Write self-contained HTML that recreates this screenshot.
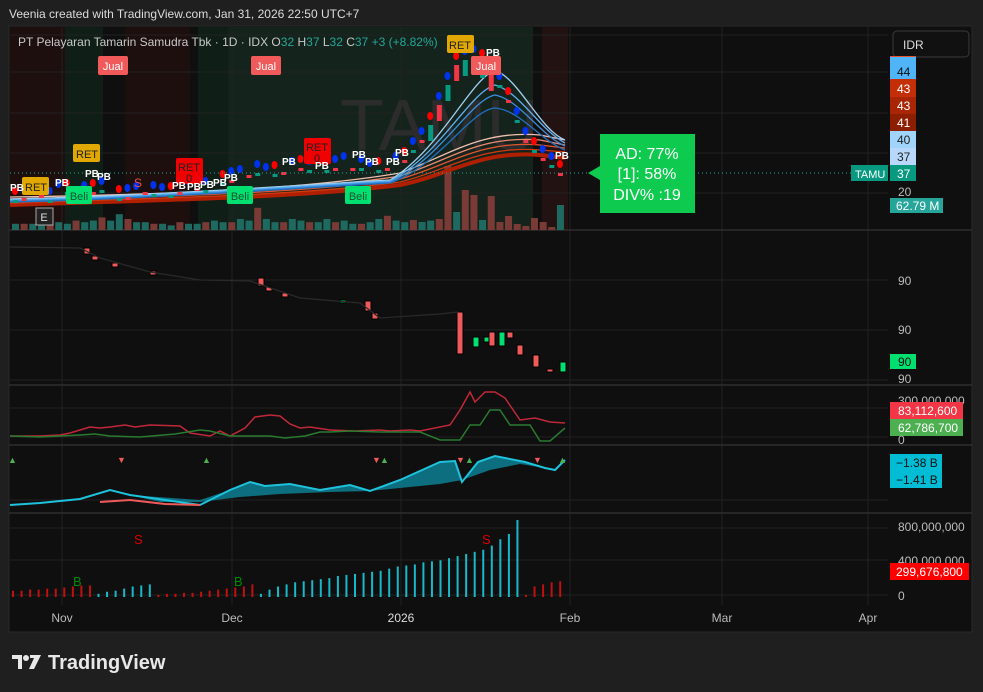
<!DOCTYPE html>
<html><head><meta charset="utf-8"><style>
body{margin:0;width:983px;height:692px;background:#1f1f1f;overflow:hidden;font-family:"Liberation Sans",sans-serif;}
svg{position:absolute;left:0;top:0}
</style></head><body>
<svg id="s" width="983" height="692" xmlns="http://www.w3.org/2000/svg" font-family="Liberation Sans, sans-serif">
<rect width="983" height="692" fill="#1f1f1f"/>
<text x="9" y="18" fill="#dcdcdc" font-size="12">Veenia created with TradingView.com, Jan 31, 2026 22:50 UTC+7</text>
<rect x="9" y="26" width="963" height="606" fill="#0f0f0f" stroke="#2a2a2a"/>
<rect x="10" y="27" width="55" height="203" fill="#1e0f0f"/>
<rect x="65" y="27" width="38" height="203" fill="#0f1f17"/>
<rect x="125" y="27" width="65" height="203" fill="#1e0f0f"/>
<rect x="198" y="27" width="30" height="203" fill="#0f1f17"/>
<rect x="228" y="27" width="237" height="203" fill="#14241c"/>
<rect x="465" y="27" width="68" height="203" fill="#14241c"/>
<rect x="542" y="27" width="26" height="203" fill="#221212"/>
<g id="grid" stroke="#222" stroke-width="1"></g>
<text x="340" y="150" fill="#2c2c2c" font-size="72">TAMU</text>
<g stroke="#2e2e2e" stroke-width="1.5">
<line x1="9" y1="230" x2="972" y2="230"/><line x1="9" y1="385" x2="972" y2="385"/>
<line x1="9" y1="445" x2="972" y2="445"/><line x1="9" y1="513" x2="972" y2="513"/>
</g>
<g id="vol"></g>
<g fill="none" stroke-width="1.3">
<path d="M10 205 C150 200 300 198 400 185 C450 175 480 150 540 155 L565 158" stroke="#b02000" stroke-width="4"/>
<path d="M10 203 C150 198 300 196 400 182 C450 170 480 145 540 150 L565 152" stroke="#d03a10"/>
<path d="M10 201 C150 197 300 194 400 179 C450 165 480 140 540 145 L565 148" stroke="#e05530"/>
<path d="M10 199 C150 196 300 192 400 176 C450 160 480 135 540 140 L565 145" stroke="#e88a70"/>
<path d="M10 197 C150 195 300 190 400 173 C450 155 480 130 540 135 L565 140" stroke="#f0c0b0"/>
<path d="M10 199 C150 196 300 185 390 180 C440 150 470 80 495 70 C520 80 540 130 565 140" stroke="#9fd0f0"/>
<path d="M10 200 C150 197 300 186 390 181 C440 155 470 92 495 85 C520 92 540 130 565 143" stroke="#60b0f0"/>
<path d="M10 201 C150 198 300 187 390 182 C440 160 470 100 495 95 C520 100 540 135 565 146" stroke="#3a90e0"/>
<path d="M10 202 C150 199 300 188 390 183 C440 165 470 110 495 108 C520 110 540 140 565 150" stroke="#2070c0"/>
</g>
<g id="dyn"></g>
<line x1="10" y1="173" x2="888" y2="173" stroke="#26a69a" stroke-dasharray="1 3"/>
<g font-size="11" text-anchor="middle">
<rect x="98" y="56" width="30" height="19" rx="2" fill="#f05a5a"/><text x="113" y="70" fill="#fff">Jual</text>
<rect x="251" y="56" width="30" height="19" rx="2" fill="#f05a5a"/><text x="266" y="70" fill="#fff">Jual</text>
<rect x="471" y="56" width="30" height="19" rx="2" fill="#f05a5a"/><text x="486" y="70" fill="#fff">Jual</text>
<rect x="447" y="35" width="27" height="18" rx="2" fill="#e0a800"/><text x="460" y="49" fill="#222">RET</text>
<rect x="73" y="144" width="27" height="18" rx="2" fill="#e0a800"/><text x="87" y="158" fill="#222">RET</text>
<rect x="22" y="177" width="27" height="18" rx="2" fill="#e0a800"/><text x="36" y="191" fill="#222">RET</text>
<rect x="176" y="158" width="27" height="26" rx="2" fill="#f00000"/><text x="189" y="171" fill="#222">RET</text><text x="189" y="182" fill="#222">0</text>
<rect x="304" y="138" width="27" height="26" rx="2" fill="#f00000"/><text x="317" y="151" fill="#222">RET</text><text x="317" y="162" fill="#222">0</text>
<rect x="66" y="186" width="26" height="18" rx="2" fill="#00e070"/><text x="79" y="200" fill="#1a5030">Beli</text>
<rect x="227" y="186" width="26" height="18" rx="2" fill="#00e070"/><text x="240" y="200" fill="#1a5030">Beli</text>
<rect x="345" y="186" width="26" height="18" rx="2" fill="#00e070"/><text x="358" y="200" fill="#1a5030">Beli</text>
<rect x="36" y="208" width="17" height="17" fill="#222" stroke="#aaa"/><text x="44" y="221" fill="#ddd">E</text>
</g>
<g font-size="10" font-weight="bold" fill="#fff">
<text x="10" y="191">PB</text><text x="55" y="186">PB</text><text x="97" y="180">PB</text><text x="85" y="177">PB</text>
<text x="172" y="189">PB</text><text x="187" y="190">PB</text><text x="200" y="188">PB</text><text x="213" y="186">PB</text><text x="224" y="181">PB</text>
<text x="282" y="165">PB</text><text x="315" y="169">PB</text><text x="352" y="158">PB</text><text x="395" y="156">PB</text><text x="365" y="165">PB</text><text x="386" y="165">PB</text>
<text x="486" y="56">PB</text><text x="555" y="159">PB</text>
</g>
<text x="134" y="187" fill="#f05050" font-size="12">S</text>
<text x="18" y="46" fill="#c8c8c8" font-size="12">PT Pelayaran Tamarin Samudra Tbk · 1D · IDX  O<tspan fill="#26a69a">32</tspan>  H<tspan fill="#26a69a">37</tspan>  L<tspan fill="#26a69a">32</tspan>  C<tspan fill="#26a69a">37</tspan>  <tspan fill="#26a69a">+3 (+8.82%)</tspan></text>
<path d="M600 134 L695 134 L695 213 L600 213 L600 180 L588 173 L600 166 Z" fill="#0ecb4f"/>
<g fill="#fff" font-size="16" text-anchor="middle"><text x="647" y="159">AD: 77%</text><text x="647" y="179"> [1]: 58%</text><text x="647" y="200">DIV% :19</text></g>
<rect x="893" y="31" width="76" height="26" rx="4" fill="#111" stroke="#3a3a3a"/><text x="903" y="49" fill="#ddd" font-size="12">IDR</text>
<g font-size="12" text-anchor="start">
<rect x="890" y="56" width="26" height="2" fill="#e05530"/>
<rect x="890" y="57" width="26" height="22" fill="#50b4f8"/><text x="897" y="76" fill="#111">44</text>
<rect x="890" y="79" width="26" height="18" fill="#c42f08"/><text x="897" y="93" fill="#fff">43</text>
<rect x="890" y="97" width="26" height="17" fill="#a82606"/><text x="897" y="110" fill="#fff">43</text>
<rect x="890" y="114" width="26" height="17" fill="#8c1e02"/><text x="897" y="127" fill="#fff">41</text>
<rect x="890" y="131" width="26" height="17" fill="#a0d4fa"/><text x="897" y="144" fill="#222">40</text>
<rect x="890" y="148" width="26" height="17" fill="#b8d8fb"/><text x="897" y="161" fill="#222">37</text>
<rect x="890" y="165" width="26" height="16" fill="#089981"/><text x="897" y="178" fill="#fff">37</text>
<rect x="851" y="165" width="37" height="16" fill="#089981"/><text x="855" y="178" fill="#fff" font-size="11">TAMU</text>
<text x="898" y="196" fill="#bbb">20</text>
<rect x="890" y="198" width="53" height="15" fill="#26a69a"/><text x="896" y="210" fill="#fff">62.79 M</text>
<text x="898" y="285" fill="#bbb">90</text><text x="898" y="334" fill="#bbb">90</text>
<rect x="890" y="354" width="26" height="15" fill="#00e070"/><text x="898" y="366" fill="#111">90</text>
<text x="898" y="383" fill="#bbb">90</text>
<text x="898" y="405" fill="#bbb">300,000,000</text>
<rect x="890" y="402" width="73" height="17" fill="#f23645"/><text x="898" y="415" fill="#fff">83,112,600</text>
<rect x="890" y="419" width="73" height="17" fill="#4caf50"/><text x="898" y="432" fill="#fff">62,786,700</text>
<text x="898" y="444" fill="#bbb">0</text>
<rect x="890" y="454" width="52" height="34" fill="#00bcd4"/><text x="896" y="467" fill="#111">−1.38 B</text><text x="896" y="484" fill="#111">−1.41 B</text>
<text x="898" y="531" fill="#bbb">800,000,000</text>
<text x="898" y="565" fill="#bbb">400,000,000</text>
<rect x="890" y="563" width="79" height="17" fill="#ff0000"/><text x="896" y="576" fill="#fff">299,676,800</text>
<text x="898" y="600" fill="#bbb">0</text>
</g>
<g fill="#bbb" font-size="12" text-anchor="middle"><text x="62" y="622">Nov</text><text x="232" y="622">Dec</text><text x="401" y="622" fill="#ddd">2026</text><text x="570" y="622">Feb</text><text x="722" y="622">Mar</text><text x="868" y="622">Apr</text></g>
<polyline fill="none" stroke="#c0283a" stroke-width="1.5" points="10,436 40,436 60,435 70,433 80,430 90,427 100,428 110,427 125,425 135,427 150,425 180,426 190,433 210,436 220,431 230,436 245,428 255,417 270,415 280,416 290,424 300,428 310,427 330,430 355,431 380,430 390,431 410,430 420,431 450,425 460,410 470,392 475,402 485,392 495,392 505,398 520,420 535,418 550,422 565,423"/>
<polyline fill="none" stroke="#2a7a30" stroke-width="1.5" points="10,436 40,437 60,436 80,435 95,434 110,436 140,437 175,434 200,430 210,431 230,436 250,436 270,436 285,438 305,436 320,432 330,432 350,431 380,432 420,432 440,440 460,440 470,425 480,425 490,410 500,410 510,425 530,425 540,441 550,441 565,428"/>
<path d="M130 495 L200 500 L230 490 L250 482 L265 486 L290 484 L320 490 L350 485 L370 491 L400 480 L440 462 L455 461 L462 482 L478 462 L495 456 L525 462 L545 468 L520 464 L490 470 L462 480 L440 484 L400 488 L370 491 L330 492 L280 494 L240 497 L200 502 L160 502 Z" fill="#0c6e7e"/>
<polyline fill="none" stroke="#1ec2dc" stroke-width="2" points="10,505 40,503 80,499 110,490 130,495 200,505 230,490 250,482 265,486 290,484 320,490 350,485 370,491 400,480 440,462 455,461 462,482 478,462 495,456 525,462 545,468 555,470 565,460"/>
<polyline fill="none" stroke="#f05a5a" stroke-width="2" points="100,502 130,500 165,504 200,505 M320,492 327,494 M455,461 462,482 M535,466 550,470 555,470"/>
<g font-size="9"><text x="8" y="463" fill="#4caf50">▲</text><text x="117" y="463" fill="#f05a5a">▼</text><text x="202" y="463" fill="#4caf50">▲</text><text x="372" y="463" fill="#f05a5a">▼</text><text x="380" y="463" fill="#4caf50">▲</text><text x="456" y="463" fill="#f05a5a">▼</text><text x="465" y="463" fill="#4caf50">▲</text><text x="533" y="463" fill="#f05a5a">▼</text><text x="558" y="463" fill="#4caf50">▲</text></g>
<g font-size="13"><text x="134" y="544" fill="#d00">S</text><text x="482" y="544" fill="#d00">S</text><text x="73" y="586" fill="#080">B</text><text x="234" y="586" fill="#080">B</text></g>
<polyline fill="none" stroke="#2a2a2a" stroke-width="1.2" points="10,247 80,248 100,258 150,272 200,280 250,281 300,298 360,303 380,318 440,314 458,312"/>
<g fill="#e8e8e8"><path d="M12 655 h10 v14 h-4 v-10 h-6z"/><circle cx="26" cy="658" r="3"/><path d="M30 655 h11 l-7 14 h-5 l5 -11 h-4z"/></g>
<text x="48" y="669" fill="#e8e8e8" font-size="20" font-weight="bold">TradingView</text>
</svg>
<script>
var NS="http://www.w3.org/2000/svg",d=document.getElementById('dyn'),g=document.getElementById('grid'),vg=document.getElementById('vol');
function el(t,a,p){var e=document.createElementNS(NS,t);for(var k in a)e.setAttribute(k,a[k]);(p||d).appendChild(e);return e;}
[62,232,401,570,722,868].forEach(function(x){el('line',{x1:x,y1:27,x2:x,y2:605},g)});
[35,72,113,153,193,280,330,380,408,437,500,528,560,595].forEach(function(y){el('line',{x1:10,y1:y,x2:888,y2:y},g)});
var N=64,x0=12,dx=8.65;
var vol=[2,2,2,3,2,3,2,4,3,4,6,4,8,5,3,3,2,2,1,3,2,2,3,4,3,3,5,4,12,5,3,3,5,4,3,3,5,3,4,2,2,3,5,7,4,3,6,5,4,5,3,3,5,4,7,2,3,4,4,3,3,2,2,3];
var big={50:64,51:18,52:40,53:35,54:10,55:34,56:8,57:14,58:6,59:4,60:12,61:8,62:3,63:25,46:10,47:8};
for(var i=0;i<N;i++){var x=x0+i*dx,h=(big[i]||vol[i]*1.6+3);
el('rect',{x:x,y:230-h,width:7,height:h,fill:(i%3==1||big[i]&&(i==50||i==53||i==56||i==57||i==59||i==60||i==61||i==62))?'#7a3a36':'#1f6a60'},vg);}
var cl=[200,198,196,195,200,193,192,190,194,192,190,200,198,197,195,192,194,196,195,192,190,188,190,185,183,180,178,175,173,176,174,172,170,168,170,172,170,168,165,168,168,172,170,168,165,160,150,140,125,105,85,65,60,58,62,75,85,100,120,140,150,158,165,173];
for(i=0;i<N;i++){var x=x0+i*dx,y=cl[i];var up=i%2==0;
if(i%3!=2||i>44)el('rect',{x:x+1,y:y,width:5,height:(i>=48&&i<56?16:3),fill:up?'#089981':'#f23645'});
if(i%4!=3||i>44)el('ellipse',{cx:x+3,cy:y-9,rx:3,ry:4,fill:(i%3==0)?'#ff0000':'#0033ee'});}
var p2=[[457,312,42,'#f05a5a'],[473,337,10,'#00e070'],[484,337,5,'#00e070'],[489,332,14,'#f05a5a'],[499,332,14,'#00e070'],[507,332,6,'#f05a5a'],[517,345,10,'#f05a5a'],[533,355,12,'#f05a5a'],[547,369,3,'#f05a5a'],[560,362,10,'#00e070'],[84,248,6,'#f05a5a'],[92,256,4,'#f05a5a'],[112,263,4,'#f05a5a'],[150,271,4,'#f05a5a'],[258,278,8,'#f05a5a'],[266,287,4,'#f05a5a'],[282,293,4,'#f05a5a'],[365,301,10,'#f05a5a'],[372,313,6,'#f05a5a'],[340,300,3,'#00e070']];
p2.forEach(function(c){el('rect',{x:c[0],y:c[1],width:6,height:c[2],fill:c[3],stroke:'#000','stroke-width':1})});
var h5=[6,6,7,7,8,8,9,10,11,11,3,5,6,8,10,11,12,2,3,3,4,4,5,6,7,8,9,10,12,3,7,10,12,14,15,16,17,18,20,21,22,23,24,25,27,29,30,31,33,34,35,37,39,41,43,45,49,55,60,72,2,10,12,14,15,17,19,22,24,26];
var cols=function(i){return (i<10||(i>=17&&i<29)||i>=60)?'#c01010':'#18b8c8'};
for(i=0;i<h5.length&&i<65;i++){var x=x0+i*8.55,h=h5[i]*1.05;if(i==59)h=77;
el('rect',{x:x,y:597-h,width:2,height:h,fill:cols(i)});}
</script>
</body></html>
